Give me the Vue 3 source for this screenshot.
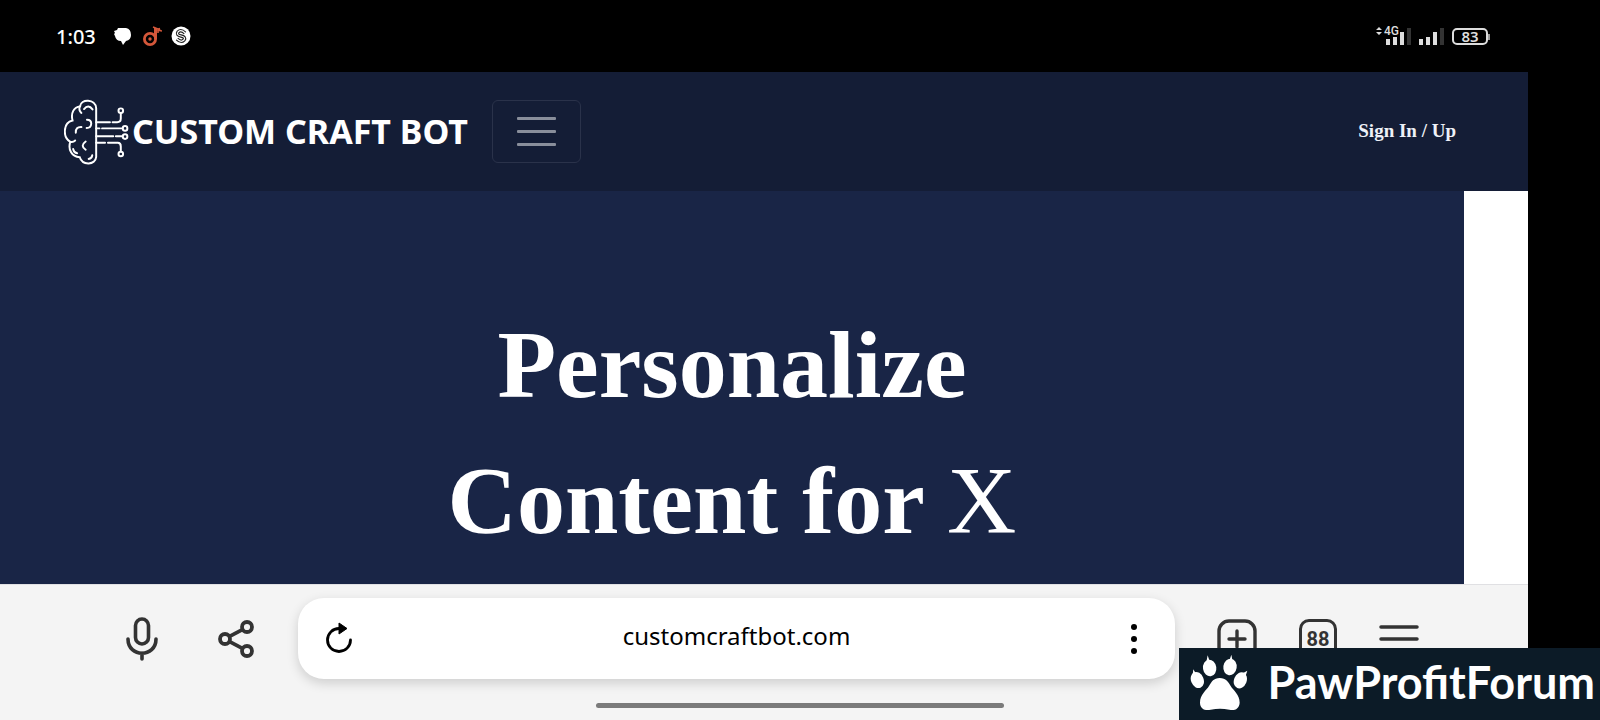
<script setup>
const signals = [
  { id: 'sim1', network: '4G' },
  { id: 'sim2', network: '' },
]
const url = 'customcraftbot.com'
const tabCount = 88
const battery = 83
</script>

<template>
  <div class="phone">
    <header class="status">
      <div class="status-left">
        <time class="clock">1:03</time>
        <svg class="status-icon" viewBox="0 0 20 20" aria-hidden="true">
          <path d="M5 2h8q5 1 5 7q0 5-5 6l-3 4l-2-4q-5 0-6-5l-1-2l1-1l-1-2l3-1z" fill="#fff" />
        </svg>
        <svg class="status-icon" viewBox="0 0 20 20" aria-hidden="true">
          <g fill="none" stroke="#d4573a">
            <circle cx="8" cy="13" r="5.6" stroke-width="2.8" />
            <path d="M13.5 13V2" stroke-width="3" />
            <path d="M11 1l5 2v4M15 4l5 1M17 2l1 3" stroke-width="1.6" />
          </g>
          <circle cx="8" cy="13" r="1.7" fill="#d4573a" />
        </svg>
        <svg class="status-icon" viewBox="0 0 20 20" aria-hidden="true">
          <circle cx="10" cy="10" r="9.5" fill="#fff" />
          <path d="M14 7Q10 3 7 6Q5 9 10 10Q15 11 13 14Q10 17 6 13" fill="none" stroke="#222" stroke-width="3.4" />
          <path d="M14 7Q10 3 7 6Q5 9 10 10Q15 11 13 14Q10 17 6 13" fill="none" stroke="#fff" stroke-width="1.2" />
        </svg>
      </div>
      <div class="status-right">
        <div v-for="s in signals" :key="s.id" class="signal">
          <span v-if="s.network" class="network">
            <svg class="updown" viewBox="0 0 6 8" aria-hidden="true"><path d="M0 3l3-3l3 3zM0 5l3 3l3-3z" fill="#ddd" /></svg>{{ s.network }}
          </span>
          <svg class="bars" viewBox="0 0 25 17" aria-hidden="true">
            <path d="M0 11h4v6h-4zM7 9h4v8h-4zM14 4h4v13h-4z" fill="#ddd" />
            <path d="M21 0h4v17h-4z" fill="#333" />
          </svg>
        </div>
        <span class="battery">{{ battery }}</span>
      </div>
    </header>

    <main class="page">
      <nav class="navbar">
        <a class="brand" href="#">
          <svg class="brain" viewBox="40 38 198 200" aria-hidden="true">
            <g fill="none" stroke="#fff" stroke-width="6" stroke-linecap="round">
              <path d="M138 66C137 36 90 36 89 60C70 62 60 80 66 103C36 110 36 154 59 168C52 190 62 213 88 215C96 241 136 239 138 214Z" />
              <path d="M88 60Q84 72 93 80M101 68Q114 52 127 69" />
              <path d="M110 101Q123 101 123 113Q122 126 109 126M93 123Q75 122 76 140" />
              <path d="M60 168Q68 170 74 164M106 167Q88 180 106 192M68 190Q70 201 80 203M115 220Q125 218 126 209" />
              <path d="M138 108H180M188 108H202Q213 108 213 97V82M138 127H148M156 127H218" />
              <path d="M138 151H190M198 151H218M138 171H165M174 171H204Q213 171 213 182V197" />
              <circle cx="213" cy="73" r="7" />
              <circle cx="226" cy="127" r="7" />
              <circle cx="226" cy="152" r="7" />
              <circle cx="213" cy="205" r="7" />
            </g>
          </svg>
          <span class="brand-name">CUSTOM CRAFT BOT</span>
        </a>
        <button class="toggler" type="button" aria-label="Toggle navigation">
          <span></span><span></span><span></span>
        </button>
        <a class="sign" href="#">Sign In / Up</a>
      </nav>
      <section class="hero">
        <h1>Personalize<br />Content for <span class="thin">X</span></h1>
      </section>
    </main>

    <footer class="toolbar">
      <div class="tools tools-left">
        <button type="button" aria-label="Voice search">
          <svg viewBox="0 0 48 48" fill="none" stroke="#333" stroke-width="3.6" stroke-linecap="round">
            <rect x="17.5" y="4" width="13" height="25" rx="6.5" />
            <path d="M10 24C10 43 38 43 38 24M24 38V44" />
          </svg>
        </button>
        <button type="button" aria-label="Share">
          <svg viewBox="0 0 48 48" fill="none" stroke="#333" stroke-width="3.8">
            <circle cx="13" cy="24" r="5" />
            <circle cx="35" cy="12" r="5" />
            <circle cx="35" cy="36" r="5" />
            <path d="M17.6 21.4L30.4 14.6M17.6 26.6L30.4 33.4" />
          </svg>
        </button>
      </div>
      <div class="address">
        <button type="button" aria-label="Reload">
          <svg viewBox="0 0 48 48">
            <path d="M24 13.500A11.500 11.500 0 1 0 35.500 25" fill="none" stroke="#000" stroke-width="2.800" stroke-linecap="round" />
            <path d="M24 8L32 13.500L24 19Z" fill="#000" stroke="#000" stroke-linejoin="round" />
          </svg>
        </button>
        <input type="text" :value="url" aria-label="Address" />
        <button type="button" aria-label="Page options">
          <svg viewBox="0 0 48 48">
            <circle cx="24" cy="12" r="3" />
            <circle cx="24" cy="24" r="3" />
            <circle cx="24" cy="36" r="3" />
          </svg>
        </button>
      </div>
      <div class="tools tools-right">
        <button type="button" aria-label="New tab">
          <svg viewBox="0 0 48 48" fill="none" stroke="#333" stroke-width="3.4" stroke-linecap="round">
            <rect x="6" y="6" width="36" height="37" rx="10" />
            <path d="M16 24H32M24 16V32" />
          </svg>
        </button>
        <button class="tabs" type="button" aria-label="Tabs"><span>{{ tabCount }}</span></button>
        <button type="button" aria-label="Menu">
          <svg viewBox="0 0 48 48" stroke="#333" stroke-width="3.500" stroke-linecap="round">
            <path d="M6 12H42M6 24H42" />
          </svg>
        </button>
      </div>
      <div class="home-bar"></div>
    </footer>

    <aside class="watermark">
      <svg class="paw" viewBox="60 38 174 171" fill="#fff" aria-hidden="true">
        <ellipse cx="119" cy="80" rx="20" ry="25" transform="rotate(-8 119 80)" />
        <ellipse cx="180" cy="77" rx="20" ry="25" transform="rotate(8 180 77)" />
        <ellipse cx="82" cy="116" rx="19" ry="25" transform="rotate(-22 82 116)" />
        <ellipse cx="211" cy="117" rx="19" ry="25" transform="rotate(22 211 117)" />
        <path d="M109 62L113 42L119 60ZM178 58L184 40L188 60ZM68 100L70 84L77 96ZM214 98L232 88L226 106Z" />
        <path d="M149 110C168 110 175 122 182 134C190 147 209 160 209 184C208 203 193 209 178 205C158 201 142 201 122 205C106 209 90 203 90 184C90 160 109 147 117 134C125 121 131 110 149 110Z" />
      </svg>
      <span>PawProfitForum</span>
    </aside>
  </div>
</template>

<style>
body {
  margin: 0;
  background: #000;
}
</style>

<style scoped>
.phone {
  position: relative;
  display: flex;
  flex-direction: column;
  min-height: 100vh;
  box-sizing: border-box;
  padding-right: 72px;
  overflow: hidden;
  background: #000;
  font-family: "Noto Sans", sans-serif;
}
button {
  display: grid;
  place-items: center;
  width: 48px;
  height: 48px;
  padding: 0;
  border: 0;
  background: none;
  color: #333;
}
button svg {
  width: 48px;
  height: 48px;
}
a {
  color: #fff;
  text-decoration: none;
}

.status {
  display: flex;
  justify-content: space-between;
  align-items: center;
  height: 72px;
  padding: 0 40px 0 56px;
  color: #fff;
}
.status-left {
  display: flex;
  align-items: center;
  gap: 9px;
}
.clock {
  margin-right: 8px;
  font-size: 20px;
  font-weight: 500;
}
.status-icon {
  width: 20px;
  height: 20px;
}
.status-right {
  display: flex;
  align-items: center;
  gap: 8px;
}
.signal {
  position: relative;
  display: flex;
}
.bars {
  width: 25px;
  height: 17px;
}
.network {
  position: absolute;
  right: 12px;
  top: -3px;
  display: flex;
  align-items: center;
  gap: 2px;
  color: #ddd;
  font: 500 12px/12px Roboto, sans-serif;
}
.updown {
  width: 6px;
  height: 8px;
}
.battery {
  position: relative;
  width: 32px;
  border: 2px solid #ddd;
  border-radius: 5px;
  color: #ddd;
  font: 600 15px/13px "Noto Sans", sans-serif;
  text-align: center;
}
.battery::after {
  content: "";
  position: absolute;
  top: 4px;
  right: -4px;
  width: 2px;
  height: 6px;
  background: #999;
}

.page {
  display: flex;
  flex: 1;
  flex-direction: column;
  background: #fff;
}
.navbar {
  display: flex;
  align-items: center;
  height: 119px;
  padding: 0 72px 0 64px;
  background: #141d36;
}
.brand {
  display: flex;
  align-items: center;
  gap: 3px;
}
.brain {
  width: 65px;
  height: 66px;
}
.brand-name {
  padding-bottom: 2px;
  font: 700 34px/40px "Noto Sans", sans-serif;
}
.toggler {
  display: flex;
  flex-direction: column;
  align-items: center;
  justify-content: center;
  gap: 10px;
  width: 89px;
  height: 63px;
  box-sizing: border-box;
  margin-left: 24px;
  border: 1px solid #2a324a;
  border-radius: 6px;
}
.toggler span {
  width: 39px;
  height: 3px;
  border-radius: 1px;
  background: #898e9b;
}
.sign {
  margin-left: auto;
  padding-bottom: 2px;
  color: #eef1f8;
  font: 700 19px/24px "Liberation Serif", serif;
}
.hero {
  flex: 1;
  margin-right: 64px;
  padding-top: 106px;
  background: #192546;
}
h1 {
  margin: 0;
  color: #fff;
  font: 700 96px/136px "Liberation Serif", serif;
  text-align: center;
}
.thin {
  font-weight: 400;
}

.toolbar {
  display: flex;
  align-items: flex-start;
  gap: 38px;
  height: 136px;
  box-sizing: border-box;
  padding: 13px 105px 0 118px;
  border-top: 1px solid #e0e0e3;
  background: #f4f4f4;
}
.tools {
  display: flex;
  margin-top: 17px;
}
.tools-left {
  gap: 46px;
}
.tools-right {
  gap: 33px;
}
.address {
  display: flex;
  flex: 1;
  align-items: center;
  height: 81px;
  box-sizing: border-box;
  padding: 0 17px;
  border-radius: 26px;
  background: #fff;
  box-shadow: 0 4px 12px rgba(0, 0, 0, 0.16);
}
.address input {
  flex: 1;
  min-width: 0;
  padding: 0 0 6px;
  border: 0;
  outline: 0;
  background: none;
  color: #000;
  font: 24px/32px "Noto Sans", sans-serif;
  text-align: center;
}
.tabs span {
  width: 32px;
  border: 3px solid #333;
  border-radius: 10px;
  font: 700 20px/34px Roboto, sans-serif;
}
.home-bar {
  position: absolute;
  bottom: 12px;
  left: 50%;
  width: 408px;
  height: 5px;
  margin-left: -204px;
  border-radius: 3px;
  background: #7b7b7b;
}

.watermark {
  position: absolute;
  right: 0;
  bottom: 0;
  display: flex;
  align-items: center;
  justify-content: space-between;
  width: 421px;
  height: 72px;
  box-sizing: border-box;
  padding: 0 5px 4px 11px;
  background: #0c1b27;
  color: #fff;
  font: 700 45px/60px Lato, sans-serif;
}
.paw {
  width: 58px;
  height: 57px;
}
</style>
